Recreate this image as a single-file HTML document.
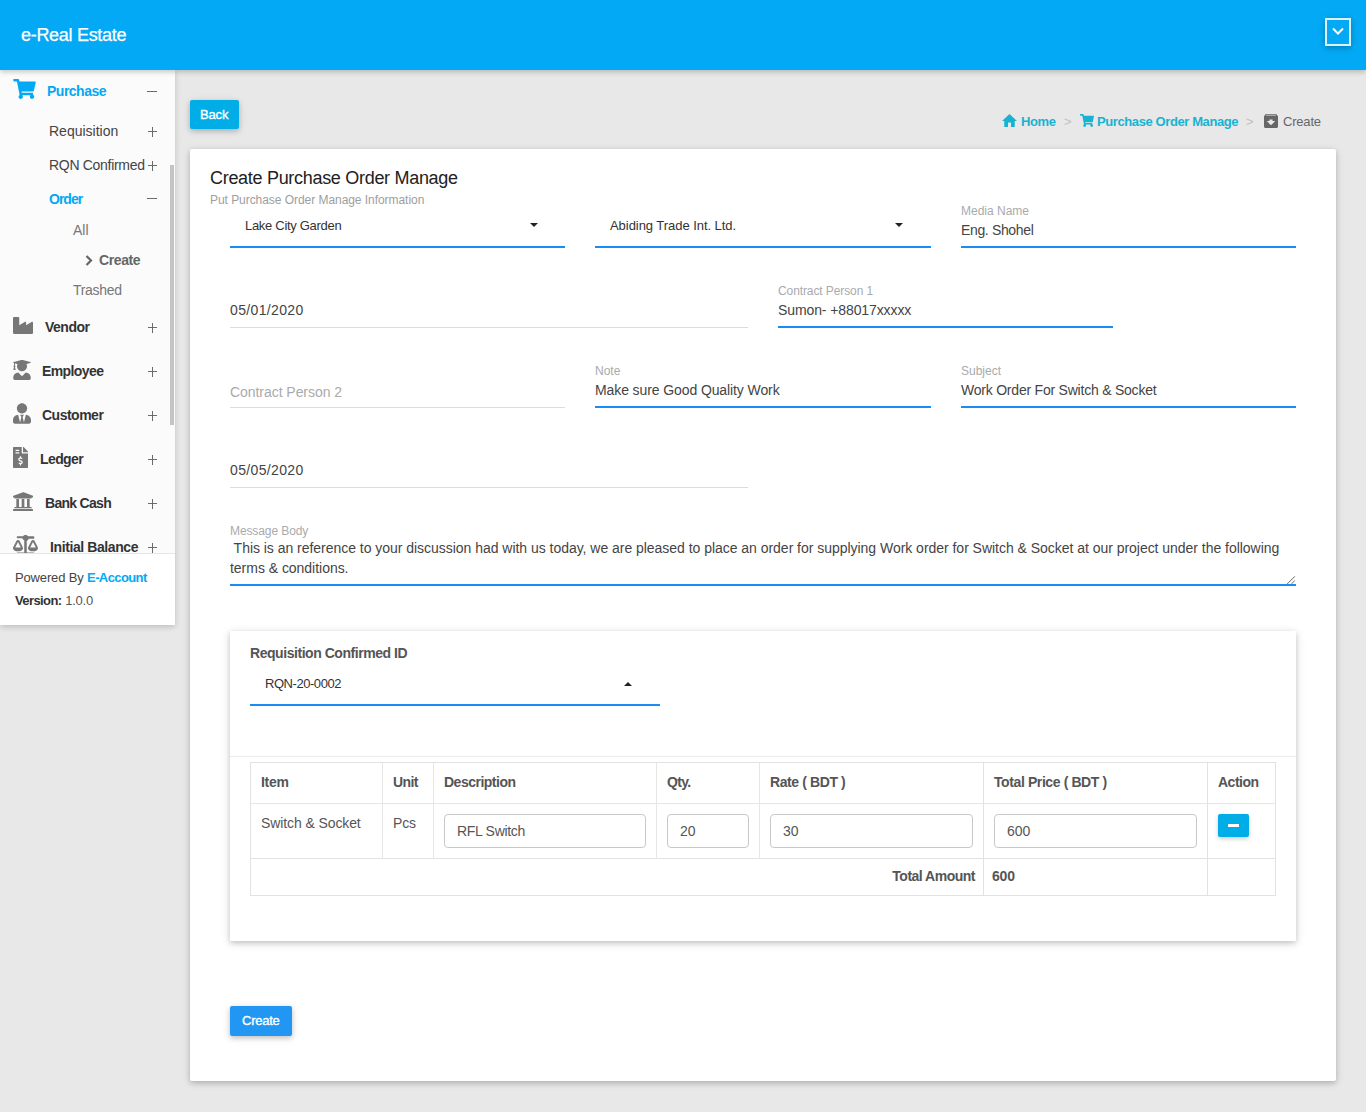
<!DOCTYPE html>
<html><head><meta charset="utf-8">
<style>
html,body{margin:0;padding:0;}
body{width:1366px;height:1112px;overflow:hidden;position:relative;background:#e8e8e8;font-family:"Liberation Sans",sans-serif;}
.a{position:absolute;}
.t{position:absolute;white-space:nowrap;font-family:"Liberation Sans",sans-serif;}
.f12{font-size:12px;line-height:12px;}
.f13{font-size:13px;line-height:13px;}
.f14{font-size:14px;line-height:14px;}
.f18{font-size:18px;line-height:18px;}
.b{font-weight:700;}
svg{position:absolute;display:block;}
</style></head><body>

<!-- header -->
<div class="a" style="left:0;top:0;width:1366px;height:70px;background:#03a9f4;box-shadow:0 2px 5px rgba(0,0,0,.21);z-index:5"></div>
<div class="t f18" style="left:21px;top:26px;color:#fff;z-index:6;letter-spacing:-0.3px;-webkit-text-stroke:0.25px #fff">e-Real Estate</div>
<div class="a" style="left:1325px;top:18px;width:22px;height:24px;border:2px solid rgba(255,255,255,.85);box-shadow:0 2px 6px rgba(0,0,0,.25);z-index:6"></div>
<svg style="left:1332px;top:27px;z-index:7" width="12" height="9" viewBox="0 0 12 9"><path d="M1 1.5 L6 6.5 L11 1.5" fill="none" stroke="#fff" stroke-width="2"/></svg>

<!-- sidebar -->
<div class="a" style="left:0;top:70px;width:175px;height:555px;background:#fff;box-shadow:0 2px 6px rgba(0,0,0,.18);z-index:3"></div>
<div class="a" style="left:0;top:70px;width:175px;height:483px;background:#fbfbfb;z-index:3"></div>
<div class="a" style="left:0;top:553px;width:175px;height:1px;background:#e6e6e6;z-index:4"></div>
<div class="a" style="left:170px;top:165px;width:4px;height:260px;background:#c4c4c4;z-index:4"></div>
<div id="side" style="position:absolute;left:0;top:0;z-index:4">

<svg style="left:13px;top:79px" width="23" height="20" viewBox="0 0 576 512"><path fill="#03a9f4" d="M528.12 301.319l47.273-208C578.806 78.301 567.391 64 551.99 64H159.208l-9.166-44.81C147.758 8.021 137.93 0 126.529 0H24C10.745 0 0 10.745 0 24v16c0 13.255 10.745 24 24 24h69.883l70.248 343.435C147.325 417.1 136 435.222 136 456c0 30.928 25.072 56 56 56s56-25.072 56-56c0-15.674-6.447-29.835-16.824-40h209.647C430.447 426.165 424 440.326 424 456c0 30.928 25.072 56 56 56s56-25.072 56-56c0-22.172-12.888-41.332-31.579-50.405l5.517-24.276c3.413-15.018-8.002-29.319-23.403-29.319H218.117l-6.545-32h293.145c11.206 0 20.92-7.754 23.403-18.681z"/></svg>
<div class="t f14 b" style="left:47px;top:84px;color:#03a9f4;letter-spacing:-0.5px">Purchase</div>
<div class="a" style="left:147px;top:91px;width:10px;height:1px;background:#6a6a6a"></div>
<div class="t f14" style="left:49px;top:124px;color:#444">Requisition</div>
<div class="t f14" style="left:49px;top:158px;color:#444;letter-spacing:-0.3px">RQN Confirmed</div>
<div class="t f14 b" style="left:49px;top:192px;color:#03a9f4;letter-spacing:-1px">Order</div>
<div class="a" style="left:147px;top:198px;width:10px;height:1px;background:#6a6a6a"></div>
<div class="t f14" style="left:73px;top:223px;color:#777">All</div>
<svg style="left:85px;top:255px" width="8" height="11" viewBox="0 0 8 11"><path d="M1.5 1 L6 5.5 L1.5 10" fill="none" stroke="#666" stroke-width="2.2"/></svg>
<div class="t f14 b" style="left:99px;top:253px;color:#666;letter-spacing:-0.4px">Create</div>
<div class="t f14" style="left:73px;top:283px;color:#777;letter-spacing:-0.3px">Trashed</div>

<svg style="left:13px;top:317px" width="20" height="17" viewBox="0 32 512 448" preserveAspectRatio="none"><path fill="#777" d="M475.115 163.781L336 252.309v-68.28c0-18.916-20.931-30.399-36.885-20.248L160 252.309V56c0-13.255-10.745-24-24-24H24C10.745 32 0 42.745 0 56v400c0 13.255 10.745 24 24 24h464c13.255 0 24-10.745 24-24V184.029c0-18.917-20.931-30.399-36.885-20.248z"/></svg>
<div class="t f14 b" style="left:45px;top:320px;color:#333;letter-spacing:-0.5px">Vendor</div>
<svg style="left:13px;top:360px" width="18" height="20" viewBox="0 0 448 512"><path fill="#777" d="M319.4 320.6L224 416l-95.4-95.4C57.1 323.7 0 382.2 0 454.4v9.6c0 26.5 21.5 48 48 48h352c26.5 0 48-21.5 48-48v-9.6c0-72.2-57.1-130.7-128.6-133.8zM13.6 79.8l6.4 1.5v58.4c-7 4.2-12 11.5-12 20.3 0 8.4 4.6 15.4 11.1 19.7L3.5 242c-1.7 6.9 2.1 14 7.6 14h41.8c5.5 0 9.3-7.1 7.6-14l-15.6-62.3C51.4 175.4 56 168.4 56 160c0-8.8-5-16.1-12-20.3V87.1l66 15.9c-8.6 17.2-14 36.4-14 57 0 70.7 57.3 128 128 128s128-57.3 128-128c0-20.6-5.3-39.8-14-57l96.3-23.2c18.2-4.4 18.2-27.1 0-31.5l-190.4-46c-13-3.1-26.7-3.1-39.7 0L13.6 48.2c-18.1 4.4-18.1 27.2 0 31.6z"/></svg>
<div class="t f14 b" style="left:42px;top:364px;color:#333;letter-spacing:-0.6px">Employee</div>
<svg style="left:13px;top:403px" width="18" height="21" viewBox="0 0 448 512"><path fill="#777" d="M224 256c70.7 0 128-57.3 128-128S294.7 0 224 0 96 57.3 96 128s57.3 128 128 128zm95.8 32.6L272 480l-32-136 32-56h-96l32 56-32 136-47.8-191.4C56.9 292 0 350.3 0 422.4V464c0 26.5 21.5 48 48 48h352c26.5 0 48-21.5 48-48v-41.6c0-72.1-56.9-130.4-128.2-133.8z"/></svg>
<div class="t f14 b" style="left:42px;top:408px;color:#333;letter-spacing:-0.5px">Customer</div>
<svg style="left:13px;top:447px" width="15" height="21" viewBox="0 0 384 512" preserveAspectRatio="none"><path fill="#777" d="M377 105L279.1 7c-4.5-4.5-10.6-7-17-7H256v128h128v-6.1c0-6.3-2.5-12.4-7-16.9zm-153 31V0H24C10.7 0 0 10.7 0 24v464c0 13.3 10.7 24 24 24h336c13.3 0 24-10.7 24-24V160H248c-13.2 0-24-10.8-24-24zM64 72c0-4.42 3.580-8 8-8h80c4.42 0 8 3.58 8 8v16c0 4.42-3.58 8-8 8H72c-4.42 0-8-3.58-8-8V72zm0 80v-16c0-4.42 3.58-8 8-8h80c4.42 0 8 3.58 8 8v16c0 4.42-3.58 8-8 8H72c-4.420 0-8-3.58-8-8zm144 263.88V440c0 4.42-3.58 8-8 8h-16c-4.42 0-8-3.58-8-8v-24.29c-11.29-.58-22.27-4.52-31.37-11.35-3.9-2.93-4.1-8.77-.57-12.14l11.75-11.21c2.77-2.64 6.89-2.76 10.13-.73 3.87 2.42 8.26 3.72 12.82 3.72h28.11c6.5 0 11.8-5.92 11.8-13.19 0-5.950-3.61-11.19-8.77-12.73l-45-13.5c-18.59-5.58-31.58-23.42-31.58-43.39 0-24.52 19.05-44.44 42.67-45.07V232c0-4.42 3.58-8 8-8h16c4.42 0 8 3.58 8 8v24.29c11.29.58 22.27 4.51 31.37 11.35 3.9 2.93 4.1 8.77.57 12.14l-11.75 11.21c-2.77 2.64-6.89 2.76-10.13.73-3.87-2.43-8.26-3.72-12.82-3.72h-28.11c-6.5 0-11.8 5.92-11.8 13.19 0 5.95 3.61 11.19 8.77 12.73l45 13.5c18.59 5.58 31.58 23.42 31.58 43.39 0 24.53-19.05 44.44-42.67 45.07z"/></svg>
<div class="t f14 b" style="left:40px;top:452px;color:#333;letter-spacing:-0.6px">Ledger</div>
<svg style="left:13px;top:492px" width="20" height="19" viewBox="16 20 480 460" preserveAspectRatio="none"><path fill="#777" d="M496 128v16a8 8 0 0 1-8 8h-24v12c0 6.627-5.373 12-12 12H60c-6.627 0-12-5.373-12-12v-12H24a8 8 0 0 1-8-8v-16a16 16 0 0 1 9.876-14.788l232-88a16 16 0 0 1 12.248 0l232 88A16 16 0 0 1 496 128zm-24 304H40c-13.255 0-24 10.745-24 24v16a8 8 0 0 0 8 8h464a8 8 0 0 0 8-8v-16c0-13.255-10.745-24-24-24zM96 192v192H60c-6.627 0-12 5.373-12 12v20h416v-20c0-6.627-5.373-12-12-12h-36V192h-64v192h-64V192h-64v192h-64V192H96z"/></svg>
<div class="t f14 b" style="left:45px;top:496px;color:#333;letter-spacing:-0.7px">Bank Cash</div>
<svg style="left:13px;top:535px" width="25" height="20" viewBox="0 0 640 512" preserveAspectRatio="none"><path fill="#777" d="M256 336h-.02c0-16.18 1.34-8.73-85.05-181.51-17.650-35.29-68.19-35.36-85.87 0C-2.06 328.75.02 320.33.02 336H0c0 44.18 57.31 80 128 80s128-35.82 128-80zM128 176l72 144H56l72-144zm511.98 160c0-16.18 1.34-8.73-85.05-181.51-17.65-35.29-68.19-35.36-85.87 0-87.12 174.26-85.04 165.84-85.04 181.51H384c0 44.18 57.31 80 128 80s128-35.82 128-80h-.02zM440 320l72-144 72 144H440zm88 128H352V153.25c23.51-10.29 41.16-31.48 46.39-57.25H528c8.84 0 16-7.16 16-16V48c0-8.84-7.16-16-16-16H383.64C369.04 12.68 346.09 0 320 0s-49.04 12.68-63.64 32H112c-8.84 0-16 7.16-16 16v16c0 8.84 7.16 16 16 16h129.61c5.23 25.76 22.87 46.96 46.39 57.25V448H112c-8.84 0-16 7.16-16 16v16c0 8.84 7.16 16 16 16h416c8.84 0 16-7.160 16-16v-16c0-8.84-7.16-16-16-16z"/></svg>
<div class="t f14 b" style="left:50px;top:540px;color:#333;letter-spacing:-0.4px">Initial Balance</div>
<div class="a" style="left:148px;top:131px;width:9px;height:1px;background:#6a6a6a"></div><div class="a" style="left:152px;top:127px;width:1px;height:10px;background:#6a6a6a"></div>
<div class="a" style="left:148px;top:165px;width:9px;height:1px;background:#6a6a6a"></div><div class="a" style="left:152px;top:161px;width:1px;height:10px;background:#6a6a6a"></div>
<div class="a" style="left:148px;top:327px;width:9px;height:1px;background:#6a6a6a"></div><div class="a" style="left:152px;top:323px;width:1px;height:10px;background:#6a6a6a"></div>
<div class="a" style="left:148px;top:371px;width:9px;height:1px;background:#6a6a6a"></div><div class="a" style="left:152px;top:367px;width:1px;height:10px;background:#6a6a6a"></div>
<div class="a" style="left:148px;top:415px;width:9px;height:1px;background:#6a6a6a"></div><div class="a" style="left:152px;top:411px;width:1px;height:10px;background:#6a6a6a"></div>
<div class="a" style="left:148px;top:459px;width:9px;height:1px;background:#6a6a6a"></div><div class="a" style="left:152px;top:455px;width:1px;height:10px;background:#6a6a6a"></div>
<div class="a" style="left:148px;top:503px;width:9px;height:1px;background:#6a6a6a"></div><div class="a" style="left:152px;top:499px;width:1px;height:10px;background:#6a6a6a"></div>
<div class="a" style="left:148px;top:547px;width:9px;height:1px;background:#6a6a6a"></div><div class="a" style="left:152px;top:543px;width:1px;height:10px;background:#6a6a6a"></div>
<div class="a" style="left:0;top:553px;width:175px;height:72px;background:#fff"></div>
<div class="a" style="left:0;top:553px;width:175px;height:1px;background:#e6e6e6"></div>
<div class="t f13" style="left:15px;top:571px;color:#444;letter-spacing:-0.15px">Powered By <span class="b" style="color:#03a9f4;letter-spacing:-0.6px">E-Account</span></div>
<div class="t f13" style="left:15px;top:594px;color:#555"><span class="b" style="color:#333;letter-spacing:-0.6px">Version:</span> <span style="letter-spacing:-0.2px">1.0.0</span></div>
</div>


<!-- main -->
<div class="a" style="left:190px;top:100px;width:49px;height:29px;background:#00ade6;border-radius:2px;box-shadow:0 2px 5px rgba(0,0,0,.18),0 2px 10px rgba(0,0,0,.1)"></div>
<div class="t f13" style="left:200px;top:108px;color:#fff;letter-spacing:-0.15px;-webkit-text-stroke:0.35px #fff">Back</div>

<svg style="left:1002px;top:114px" width="15" height="13" viewBox="2 3 20 17" preserveAspectRatio="none"><path fill="#17b3d3" d="M10 20v-6h4v6h5v-8h3L12 3 2 12h3v8z"/></svg>
<div class="t f13 b" style="left:1021px;top:115px;color:#17b3d3;letter-spacing:-0.4px">Home</div>
<div class="t f13" style="left:1064px;top:115px;color:#c0c0c0">&gt;</div>
<svg style="left:1080px;top:114px" width="14" height="13" viewBox="0 0 576 512" preserveAspectRatio="none"><path fill="#17b3d3" d="M528.12 301.319l47.273-208C578.806 78.301 567.391 64 551.99 64H159.208l-9.166-44.81C147.758 8.021 137.93 0 126.529 0H24C10.745 0 0 10.745 0 24v16c0 13.255 10.745 24 24 24h69.883l70.248 343.435C147.325 417.1 136 435.222 136 456c0 30.928 25.072 56 56 56s56-25.072 56-56c0-15.674-6.447-29.835-16.824-40h209.647C430.447 426.165 424 440.326 424 456c0 30.928 25.072 56 56 56s56-25.072 56-56c0-22.172-12.888-41.332-31.579-50.405l5.517-24.276c3.413-15.018-8.002-29.319-23.403-29.319H218.117l-6.545-32h293.145c11.206 0 20.92-7.754 23.403-18.681z"/></svg>
<div class="t f13 b" style="left:1097px;top:115px;color:#17b3d3;letter-spacing:-0.4px">Purchase Order Manage</div>
<div class="t f13" style="left:1246px;top:115px;color:#c0c0c0">&gt;</div>
<svg style="left:1264px;top:114px" width="14" height="14" viewBox="3 3 18 18" preserveAspectRatio="none"><path fill="#666" d="M20.54 5.23l-1.39-1.68C18.88 3.21 18.47 3 18 3H6c-.47 0-.88.21-1.16.55L3.46 5.23C3.17 5.570 3 6.02 3 6.5V19c0 1.1.9 2 2 2h14c1.1 0 2-.9 2-2V6.5c0-.48-.17-.93-.46-1.27zM12 17.5L6.5 12H10v-2h4v2h3.5L12 17.5zM5.12 5l.81-1h12l.94 1H5.12z"/></svg>
<div class="t f13" style="left:1283px;top:115px;color:#666;letter-spacing:-0.2px">Create</div>

<div class="a" style="left:190px;top:149px;width:1146px;height:932px;background:#fff;border-radius:2px;box-shadow:0 2px 5px rgba(0,0,0,.16),0 2px 10px rgba(0,0,0,.12)"></div>
<div class="t f18" style="left:210px;top:169px;color:#212121;letter-spacing:-0.3px">Create Purchase Order Manage</div>
<div class="t f12" style="left:210px;top:194px;color:#9e9e9e;letter-spacing:-0.05px">Put Purchase Order Manage Information</div>

<!-- row1 -->
<div class="t f13" style="left:245px;top:219px;color:#333;letter-spacing:-0.3px">Lake City Garden</div>
<svg style="left:530px;top:223px" width="8" height="4" viewBox="0 0 8 4"><path d="M0 0H8L4 4z" fill="#222"/></svg>
<div class="a" style="left:230px;top:246px;width:335px;height:2px;background:#1a8cf2"></div>
<div class="t f13" style="left:610px;top:219px;color:#333;letter-spacing:-0.05px">Abiding Trade Int. Ltd.</div>
<svg style="left:895px;top:223px" width="8" height="4" viewBox="0 0 8 4"><path d="M0 0H8L4 4z" fill="#222"/></svg>
<div class="a" style="left:595px;top:246px;width:336px;height:2px;background:#1a8cf2"></div>
<div class="t f12" style="left:961px;top:205px;color:#aaa">Media Name</div>
<div class="t f14" style="left:961px;top:223px;color:#444;letter-spacing:-0.35px">Eng. Shohel</div>
<div class="a" style="left:961px;top:246px;width:335px;height:2px;background:#1a8cf2"></div>

<!-- row2 -->
<div class="t f14" style="left:230px;top:303px;color:#444;letter-spacing:0.35px">05/01/2020</div>
<div class="a" style="left:230px;top:327px;width:518px;height:1px;background:#dcdcdc"></div>
<div class="t f12" style="left:778px;top:285px;color:#aaa;letter-spacing:-0.1px">Contract Person 1</div>
<div class="t f14" style="left:778px;top:303px;color:#444;letter-spacing:-0.1px">Sumon- +88017xxxxx</div>
<div class="a" style="left:778px;top:326px;width:335px;height:2px;background:#1a8cf2"></div>

<!-- row3 -->
<div class="t f14" style="left:230px;top:385px;color:#aaa;letter-spacing:-0.05px">Contract Person 2</div>
<div class="a" style="left:230px;top:407px;width:335px;height:1px;background:#dcdcdc"></div>
<div class="t f12" style="left:595px;top:365px;color:#aaa">Note</div>
<div class="t f14" style="left:595px;top:383px;color:#444;letter-spacing:-0.1px">Make sure Good Quality Work</div>
<div class="a" style="left:595px;top:406px;width:336px;height:2px;background:#1a8cf2"></div>
<div class="t f12" style="left:961px;top:365px;color:#aaa">Subject</div>
<div class="t f14" style="left:961px;top:383px;color:#444;letter-spacing:-0.22px">Work Order For Switch &amp; Socket</div>
<div class="a" style="left:961px;top:406px;width:335px;height:2px;background:#1a8cf2"></div>

<!-- row4 -->
<div class="t f14" style="left:230px;top:463px;color:#444;letter-spacing:0.35px">05/05/2020</div>
<div class="a" style="left:230px;top:487px;width:518px;height:1px;background:#dcdcdc"></div>

<!-- row5 -->
<div class="t f12" style="left:230px;top:525px;color:#aaa;letter-spacing:-0.1px">Message Body</div>
<div class="t f14" style="left:230px;top:538px;color:#444;letter-spacing:-0.03px;line-height:20px;white-space:pre"> This is an reference to your discussion had with us today, we are pleased to place an order for supplying Work order for Switch &amp; Socket at our project under the following<br>terms &amp; conditions.</div>
<div class="a" style="left:230px;top:584px;width:1066px;height:2px;background:#1a8cf2"></div>
<svg style="left:1285px;top:575px" width="11" height="10" viewBox="0 0 11 10"><path d="M2 9.2L9.8 1.4M6.2 9.2L9.8 5.6" stroke="#666" stroke-width="1" fill="none"/></svg>

<!-- inner card -->
<div class="a" style="left:230px;top:631px;width:1066px;height:310px;background:#fff;box-shadow:0 2px 5px rgba(0,0,0,.16),0 2px 10px rgba(0,0,0,.12)"></div>
<div class="t f14 b" style="left:250px;top:646px;color:#555;letter-spacing:-0.45px">Requisition Confirmed ID</div>
<div class="t f13" style="left:265px;top:677px;color:#333;letter-spacing:-0.45px">RQN-20-0002</div>
<svg style="left:624px;top:682px" width="8" height="4" viewBox="0 0 8 4"><path d="M0 4H8L4 0z" fill="#222"/></svg>
<div class="a" style="left:250px;top:704px;width:410px;height:2px;background:#1a8cf2"></div>
<div class="a" style="left:230px;top:756px;width:1066px;height:1px;background:#ececec"></div>

<!-- table -->
<div class="a" style="left:250px;top:762px;width:1024px;height:132px;border:1px solid #e2e2e2"></div>
<div class="a" style="left:251px;top:803px;width:1024px;height:1px;background:#e6e6e6"></div>
<div class="a" style="left:251px;top:858px;width:1024px;height:1px;background:#e2e2e2"></div>
<div class="a" style="left:382px;top:763px;width:1px;height:95px;background:#e6e6e6"></div>
<div class="a" style="left:433px;top:763px;width:1px;height:95px;background:#e6e6e6"></div>
<div class="a" style="left:656px;top:763px;width:1px;height:95px;background:#e6e6e6"></div>
<div class="a" style="left:759px;top:763px;width:1px;height:95px;background:#e6e6e6"></div>
<div class="a" style="left:983px;top:763px;width:1px;height:132px;background:#e2e2e2"></div>
<div class="a" style="left:1207px;top:763px;width:1px;height:132px;background:#e2e2e2"></div>

<div class="t f14 b" style="left:261px;top:775px;color:#555;letter-spacing:-0.3px">Item</div>
<div class="t f14 b" style="left:393px;top:775px;color:#555;letter-spacing:-0.6px">Unit</div>
<div class="t f14 b" style="left:444px;top:775px;color:#555;letter-spacing:-0.5px">Description</div>
<div class="t f14 b" style="left:667px;top:775px;color:#555;letter-spacing:-0.7px">Qty.</div>
<div class="t f14 b" style="left:770px;top:775px;color:#555;letter-spacing:-0.4px">Rate ( BDT )</div>
<div class="t f14 b" style="left:994px;top:775px;color:#555;letter-spacing:-0.4px">Total Price ( BDT )</div>
<div class="t f14 b" style="left:1218px;top:775px;color:#555;letter-spacing:-0.5px">Action</div>

<div class="t f14" style="left:261px;top:816px;color:#555;letter-spacing:-0.1px">Switch &amp; Socket</div>
<div class="t f14" style="left:393px;top:816px;color:#555;letter-spacing:-0.2px">Pcs</div>
<div class="a" style="left:444px;top:814px;width:200px;height:32px;border:1px solid #c8c8c8;border-radius:4px"></div>
<div class="t f14" style="left:457px;top:824px;color:#555;letter-spacing:-0.3px">RFL Switch</div>
<div class="a" style="left:667px;top:814px;width:80px;height:32px;border:1px solid #c8c8c8;border-radius:4px"></div>
<div class="t f14" style="left:680px;top:824px;color:#555">20</div>
<div class="a" style="left:770px;top:814px;width:201px;height:32px;border:1px solid #c8c8c8;border-radius:4px"></div>
<div class="t f14" style="left:783px;top:824px;color:#555">30</div>
<div class="a" style="left:994px;top:814px;width:201px;height:32px;border:1px solid #c8c8c8;border-radius:4px"></div>
<div class="t f14" style="left:1007px;top:824px;color:#555">600</div>
<div class="a" style="left:1218px;top:814px;width:31px;height:23px;background:#00ade6;border-radius:2px;box-shadow:0 2px 4px rgba(0,0,0,.2)"></div>
<div class="a" style="left:1228px;top:824px;width:11px;height:3px;background:#fff"></div>

<div class="t f14 b" style="left:890px;top:869px;color:#555;letter-spacing:-0.5px;width:85px;text-align:right">Total Amount</div>
<div class="t f14 b" style="left:992px;top:869px;color:#555;letter-spacing:-0.2px">600</div>

<div class="a" style="left:230px;top:1006px;width:62px;height:30px;background:#2196f3;border-radius:2px;box-shadow:0 2px 5px rgba(0,0,0,.18),0 2px 10px rgba(0,0,0,.1)"></div>
<div class="t f13" style="left:242px;top:1014px;color:#fff;letter-spacing:-0.25px;-webkit-text-stroke:0.35px #fff">Create</div>

</body></html>
